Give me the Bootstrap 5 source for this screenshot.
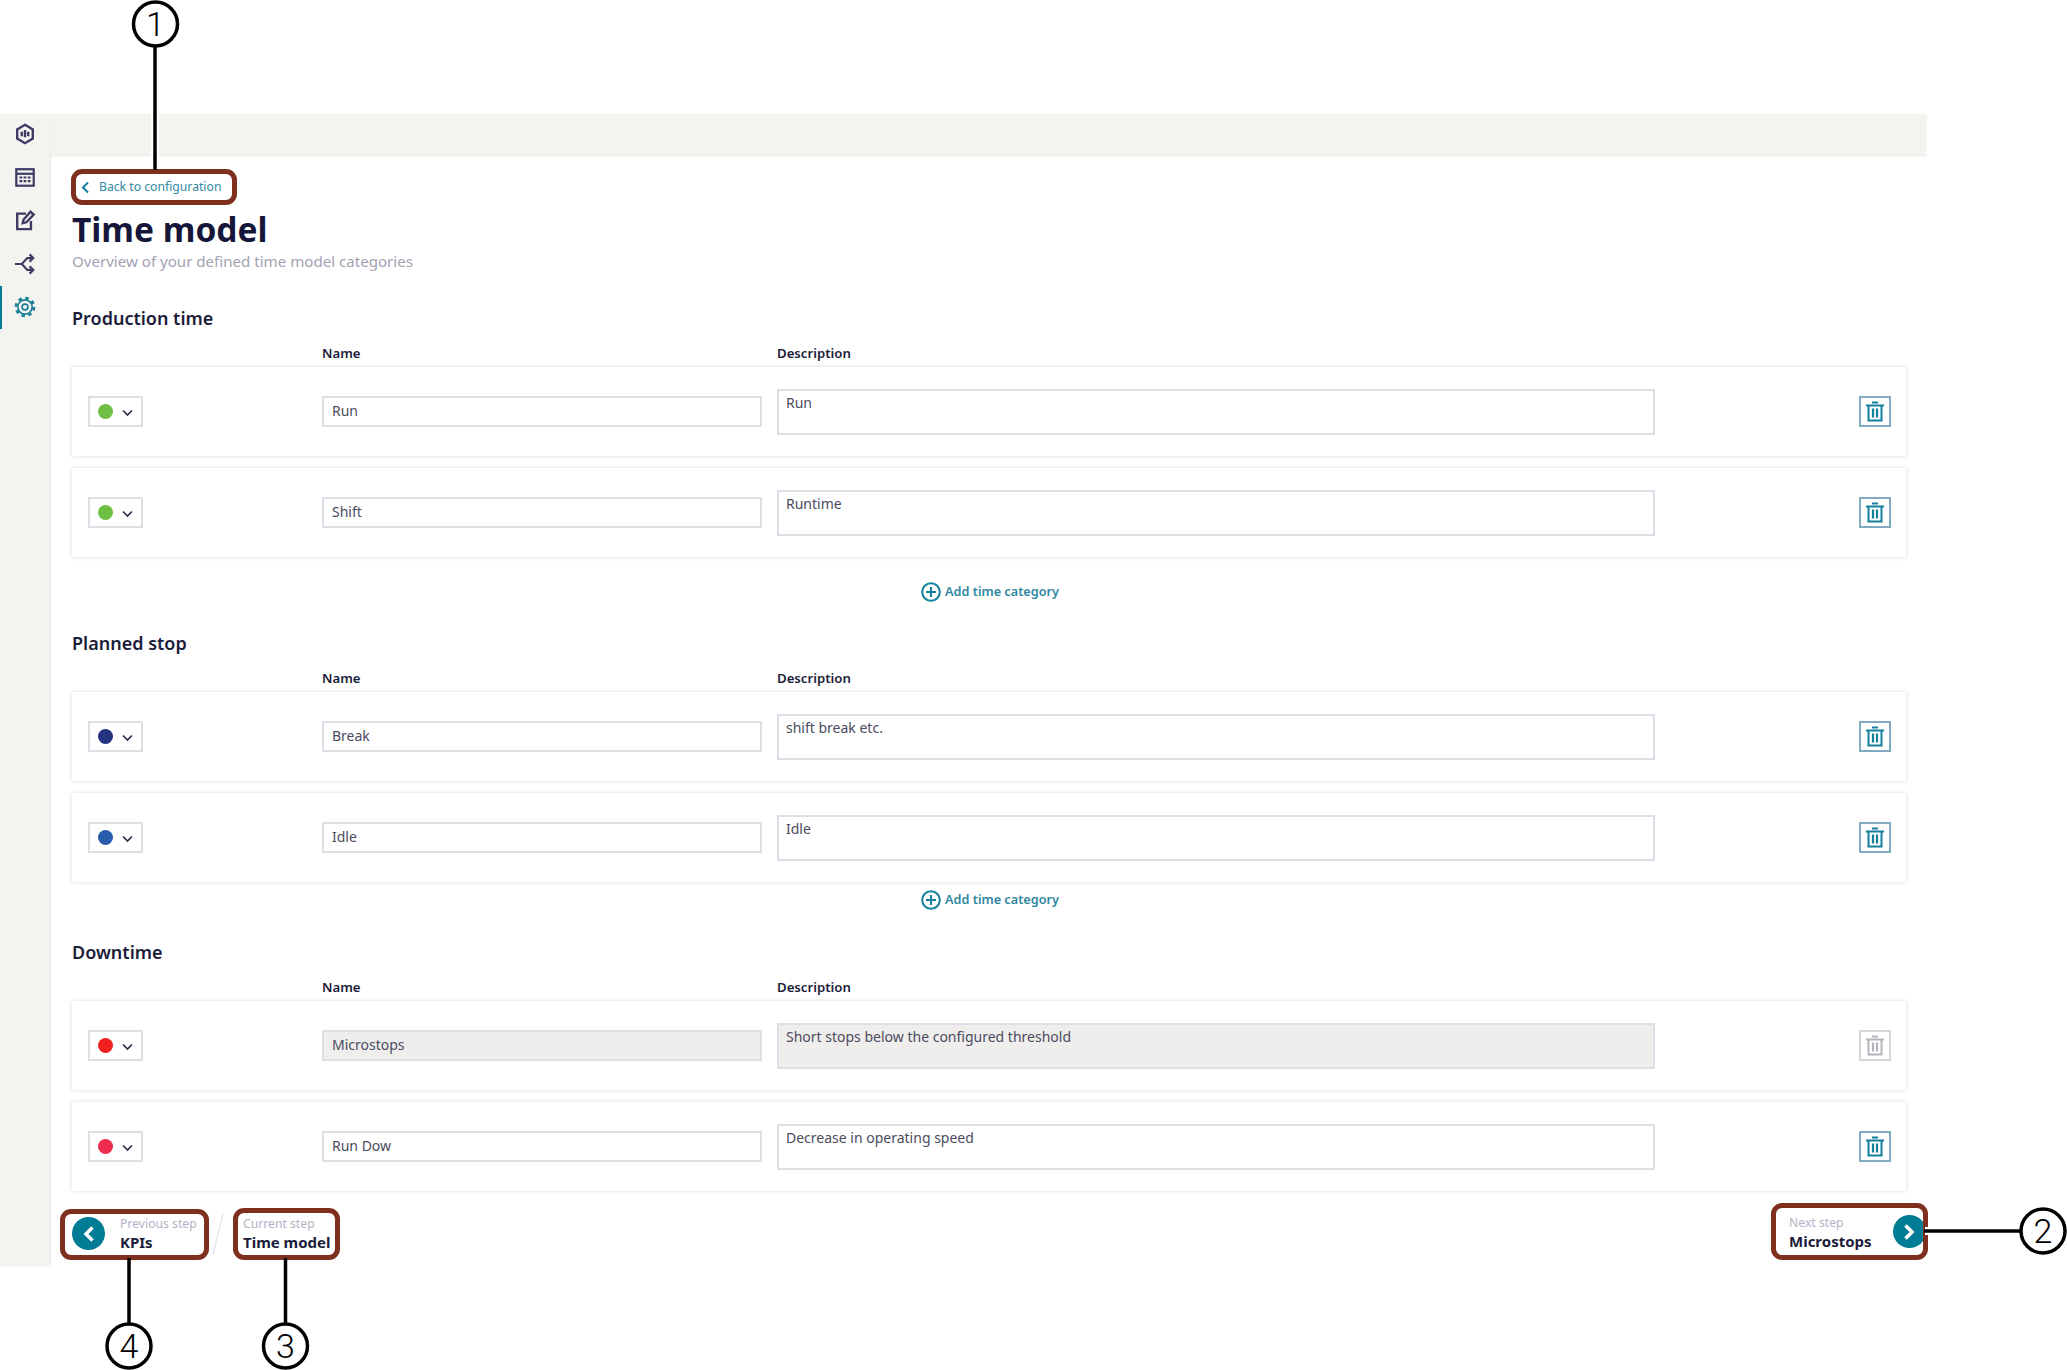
<!DOCTYPE html>
<html lang="en">
<head>
    <meta charset="UTF-8">
    <meta name="viewport" content="width=device-width, initial-scale=1.0">
    <title>Time model</title>
    <link href="https://cdn.jsdelivr.net/npm/bootstrap@5.3.0/dist/css/bootstrap.min.css" rel="stylesheet">
    <style>
        body { font-family: "Noto Sans", "Liberation Sans", sans-serif; color: #1b1b3a; background: #fff; width: 2067px; height: 1370px; overflow: hidden; position: relative; }
        .app-frame { width: 1926px; height: 1153px; margin-top: 114px; }
        .side-rail { width: 50px; background: #f3f3ef; flex: none; box-shadow: 1px 0 1px #ecebe6; }
        .rail-item { height: 43.4px; color: #3d3b63; position: relative; }
        .rail-item:first-child { margin-top: -2px; }
        .rail-item svg { width: 22px; height: 22px; }
        .rail-item.active { color: #1d8098; }
        .rail-item.active::before { content: ""; position: absolute; left: 0; top: 0; bottom: 0; width: 2px; background: #007c95; }
        .main-pane { min-width: 0; }
        .top-strip { height: 41px; background: #f3f3ef; box-shadow: 0 1px 2px #e9e8e4; }
        .page-body { padding: 0 20px 0 22px; }
        .callout-box { border: 5px solid #7f2f1d; border-radius: 11px; background: #fff; }
        .back-link { width: 166px; height: 36px; margin-left: -1px; margin-top: 14px; padding-left: 5px; font-size: 12.2px; color: #2f8aa1; text-decoration: none; gap: 9px; white-space: nowrap; }
        .back-link svg { width: 9px; height: 13px; flex: none; }
        .page-title { font-size: 33.5px; line-height: 40px; font-weight: 700; margin: 4px 0 2px; color: #16163a; }
        .page-sub { font-size: 15.1px; line-height: 20px; color: #a3a2b3; }
        .group-title { font-size: 18px; line-height: 26px; font-weight: 600; margin: 0; color: #1b1b3a; }
        .first-group { margin-top: 34px; }
        .later-group { margin-top: 28px; }
        .last-group { margin-top: 29px; }
        .grid-cols { display: grid; grid-template-columns: 234px 440px 878px 1fr; column-gap: 0; }
        .col-names { padding-left: 16px; font-size: 13.2px; line-height: 18px; font-weight: 600; margin-top: 13px; margin-bottom: 5px; }
        .col-names span:nth-child(3) { margin-left: 15px; }
        .cat-card { border: 0; border-radius: 0; padding: 0 15px 0 16px; height: 89px; margin-bottom: 12px; align-items: center; box-shadow: 0 0 4px rgba(60, 60, 60, .2); }
        .dot-select { width: 55px; height: 31px; border: 2px solid #e0dfe6; padding-left: 8px; gap: 9px; background: #fff; }
        .dot-mark { width: 15px; height: 15px; border-radius: 50%; }
        .dot-select svg { width: 11px; height: 8px; margin-top: 2px; }
        .field-box { border: 2px solid #dfdee6; border-radius: 0; font-size: 14px; color: #4b4b60; padding: 2px 8px 4px; box-shadow: none; resize: none; }
        .name-box { width: 440px; height: 31px; }
        .desc-box { width: 878px; height: 46px; margin-left: 15px; line-height: 20px; padding: 2px 7px; overflow: hidden; }
        .field-box:disabled { background: #efeeec; opacity: 1; }
        .trash-btn { width: 32px; height: 31px; border: 2px solid #80abc0; border-radius: 0; padding: 0; color: #127f9c; background: #fff; }
        .trash-btn svg { width: 20px; height: 21px; }
        .trash-btn:disabled { border-color: #d8d7df; color: #b4b4bc; opacity: 1; }
        .add-link { height: 20px; font-size: 12.7px; font-weight: 600; color: #2f88a0; text-decoration: none; gap: 4px; margin-top: 25px; padding-left: 2px; }
        .add-link.add-tight { margin-top: -4px; }
        .add-link svg { width: 20px; height: 20px; }
        .wizard-foot { margin: 0 -22px 0 -12px; align-items: flex-end; }
        .wizard-step { overflow: hidden; }
        .step-tag { font-size: 12.2px; line-height: 16px; color: #b3b2c3; }
        .step-name { font-size: 15px; line-height: 20px; font-weight: 700; color: #1b1b3a; }
        .step-round { width: 33px; height: 33px; border-radius: 50%; background: #007c95; flex: none; }
        .step-round svg { width: 14px; height: 18px; }
        .prev-step { width: 149px; height: 51px; padding: 0 0 2px 7px; gap: 15px; }
        .cur-step { width: 107px; height: 52px; padding: 3px 0 0 5px; margin-left: 24px; position: relative; }
        .cur-step-wrap { position: relative; }
        .step-slash { width: 12px; height: 40px; position: absolute; left: 152px; bottom: 6px; }
        .next-step { width: 157px; height: 57px; padding: 2px 0 0 13px; gap: 21px; }
        .next-step .step-round { margin-top: -2px; }
        .anno-layer { position: absolute; left: 0; top: 0; width: 2067px; height: 1370px; pointer-events: none; }
        .anno-layer text { font-family: "Roboto", "Liberation Sans", sans-serif; font-weight: 300; font-size: 34px; text-anchor: middle; fill: #000; }
    </style>
</head>
<body>
    <svg width="0" height="0" class="position-absolute">
        <symbol id="ico-down" viewBox="0 0 10 7"><path d="M1 1.200 5 5.400 9 1.200" fill="none" stroke="#2c2c44" stroke-width="1.500"/></symbol>
        <symbol id="ico-trash" viewBox="0 0 20 21"><g fill="none" stroke="currentColor"><path d="M7 1.500h6" stroke-width="2"/><path d="M1 4.500h18" stroke-width="2"/><path d="M3.500 5v14.500h13V5" stroke-width="2"/><path d="M8 7.500v9M12 7.500v9" stroke-width="2.200"/></g></symbol>
        <symbol id="ico-plus" viewBox="0 0 20 20"><g fill="none" stroke="#127f9c" stroke-width="2"><circle cx="10" cy="10" r="8.800"/><path d="M10 5v10M5 10h10"/></g></symbol>
    </svg>

    <div class="app-frame d-flex">
        <!-- Left icon rail -->
        <nav class="side-rail d-flex flex-column">
            <div class="rail-item d-flex align-items-center justify-content-center">
                <svg viewBox="0 0 24 24" fill="none" stroke="currentColor" stroke-width="2.600"><path d="M12 2 20.500 7v10L12 22l-8.500-5V7z"/><path d="M8.500 9.500v5M12 7.500v8M15.500 9.500v5"/></svg>
            </div>
            <div class="rail-item d-flex align-items-center justify-content-center">
                <svg viewBox="0 0 24 24" fill="none" stroke="currentColor" stroke-width="2.400"><rect x="2.500" y="3.500" width="19" height="18"/><path d="M2.500 8.500h19"/><path d="M6 12.500h3M10.500 12.500h3M15 12.500h3M6 16.500h3M10.500 16.500h3M15 16.500h3" stroke-width="2.200"/></svg>
            </div>
            <div class="rail-item d-flex align-items-center justify-content-center">
                <svg viewBox="0 0 24 24" fill="none" stroke="currentColor" stroke-width="2.600"><path d="M13 5H3.500v17h15v-9"/><path d="M9.500 15.500l1-4L18 3l3.500 3-8 8.500z"/></svg>
            </div>
            <div class="rail-item d-flex align-items-center justify-content-center">
                <svg viewBox="0 0 24 24" fill="none" stroke="currentColor" stroke-width="2.400"><path d="M1 12h7.500l6-6.500h6M8.500 12l6 6.500h6"/><path d="M17 1.500l4 4-4 4M17 14.500l4 4-4 4"/></svg>
            </div>
            <div class="rail-item active d-flex align-items-center justify-content-center">
                <svg viewBox="0 0 24 24" fill="none" stroke="currentColor"><circle cx="12" cy="12" r="3.200" stroke-width="1.800"/><circle cx="12" cy="12" r="7.800" stroke-width="1.800"/><circle cx="12" cy="12" r="9.800" stroke-width="3" stroke-dasharray="3.800 3.900"/></svg>
            </div>
        </nav>

        <div class="main-pane flex-grow-1">
            <div class="top-strip"></div>
            <div class="page-body">
                <a href="#" class="back-link callout-box d-flex align-items-center">
                    <svg viewBox="0 0 9 13"><path d="M7 1.500 2 6.500l5 5" fill="none" stroke="#127f9c" stroke-width="2"/></svg>
                    <span>Back to configuration</span>
                </a>
                <h1 class="page-title">Time model</h1>
                <div class="page-sub">Overview of your defined time model categories</div>

                <!-- Production time -->
                <h2 class="group-title first-group">Production time</h2>
                <div class="grid-cols col-names"><span></span><span>Name</span><span>Description</span></div>
                <div class="card cat-card grid-cols">
                    <div class="dot-select d-flex align-items-center"><span class="dot-mark" style="background:#6fbf44"></span><svg><use href="#ico-down"/></svg></div>
                    <input class="form-control field-box name-box" value="Run">
                    <textarea class="form-control field-box desc-box">Run</textarea>
                    <div class="d-flex justify-content-end"><button type="button" class="btn trash-btn d-flex align-items-center justify-content-center"><svg><use href="#ico-trash"/></svg></button></div>
                </div>
                <div class="card cat-card grid-cols">
                    <div class="dot-select d-flex align-items-center"><span class="dot-mark" style="background:#6fbf44"></span><svg><use href="#ico-down"/></svg></div>
                    <input class="form-control field-box name-box" value="Shift">
                    <textarea class="form-control field-box desc-box">Runtime</textarea>
                    <div class="d-flex justify-content-end"><button type="button" class="btn trash-btn d-flex align-items-center justify-content-center"><svg><use href="#ico-trash"/></svg></button></div>
                </div>
                <a href="#" class="add-link d-flex align-items-center justify-content-center"><svg><use href="#ico-plus"/></svg>Add time category</a>

                <!-- Planned stop -->
                <h2 class="group-title later-group">Planned stop</h2>
                <div class="grid-cols col-names"><span></span><span>Name</span><span>Description</span></div>
                <div class="card cat-card grid-cols">
                    <div class="dot-select d-flex align-items-center"><span class="dot-mark" style="background:#24327f"></span><svg><use href="#ico-down"/></svg></div>
                    <input class="form-control field-box name-box" value="Break">
                    <textarea class="form-control field-box desc-box">shift break etc.</textarea>
                    <div class="d-flex justify-content-end"><button type="button" class="btn trash-btn d-flex align-items-center justify-content-center"><svg><use href="#ico-trash"/></svg></button></div>
                </div>
                <div class="card cat-card grid-cols">
                    <div class="dot-select d-flex align-items-center"><span class="dot-mark" style="background:#2a5cad"></span><svg><use href="#ico-down"/></svg></div>
                    <input class="form-control field-box name-box" value="Idle">
                    <textarea class="form-control field-box desc-box">Idle</textarea>
                    <div class="d-flex justify-content-end"><button type="button" class="btn trash-btn d-flex align-items-center justify-content-center"><svg><use href="#ico-trash"/></svg></button></div>
                </div>
                <a href="#" class="add-link add-tight d-flex align-items-center justify-content-center"><svg><use href="#ico-plus"/></svg>Add time category</a>

                <!-- Downtime -->
                <h2 class="group-title last-group">Downtime</h2>
                <div class="grid-cols col-names"><span></span><span>Name</span><span>Description</span></div>
                <div class="card cat-card grid-cols">
                    <div class="dot-select d-flex align-items-center"><span class="dot-mark" style="background:#f0201f"></span><svg><use href="#ico-down"/></svg></div>
                    <input class="form-control field-box name-box" value="Microstops" disabled>
                    <textarea class="form-control field-box desc-box" disabled>Short stops below the configured threshold</textarea>
                    <div class="d-flex justify-content-end"><button type="button" class="btn trash-btn d-flex align-items-center justify-content-center" disabled><svg><use href="#ico-trash"/></svg></button></div>
                </div>
                <div class="card cat-card grid-cols">
                    <div class="dot-select d-flex align-items-center"><span class="dot-mark" style="background:#ef2b4e"></span><svg><use href="#ico-down"/></svg></div>
                    <input class="form-control field-box name-box" value="Run Dow">
                    <textarea class="form-control field-box desc-box">Decrease in operating speed</textarea>
                    <div class="d-flex justify-content-end"><button type="button" class="btn trash-btn d-flex align-items-center justify-content-center"><svg><use href="#ico-trash"/></svg></button></div>
                </div>

                <!-- Wizard steps -->
                <div class="wizard-foot d-flex justify-content-between">
                    <div class="d-flex align-items-end cur-step-wrap">
                        <a href="#" class="wizard-step prev-step callout-box d-flex align-items-center text-decoration-none">
                            <span class="step-round d-flex align-items-center justify-content-center"><svg viewBox="0 0 14 18"><path d="M10.500 2.500 4 9l6.500 6.500" fill="none" stroke="#fff" stroke-width="3.500"/></svg></span>
                            <span class="d-block"><span class="step-tag d-block">Previous step</span><span class="step-name d-block">KPIs</span></span>
                        </a>
                        <svg class="step-slash" viewBox="0 0 12 40"><path d="M11 0 1 40" stroke="#e3e2e8" stroke-width="1.200"/></svg>
                        <div class="wizard-step cur-step callout-box">
                            <div class="step-tag">Current step</div>
                            <div class="step-name">Time model</div>
                        </div>
                    </div>
                    <a href="#" class="wizard-step next-step callout-box d-flex align-items-center text-decoration-none">
                        <span class="d-block"><span class="step-tag d-block">Next step</span><span class="step-name d-block">Microstops</span></span>
                        <span class="step-round d-flex align-items-center justify-content-center"><svg viewBox="0 0 14 18"><path d="M3.500 2.500 10 9l-6.500 6.500" fill="none" stroke="#fff" stroke-width="3.500"/></svg></span>
                    </a>
                </div>
            </div>
        </div>
    </div>

    <!-- Numbered callouts drawn over the screen -->
    <svg class="anno-layer" viewBox="0 0 2067 1370">
        <g fill="none" stroke="#fff" stroke-width="8">
            <path d="M155 46V168"/><path d="M1925 1231H2020"/>
        </g>
        <g fill="none" stroke="#000" stroke-width="3.500">
            <path d="M155 46V170"/><path d="M1924 1231H2021"/><path d="M285.500 1258V1324"/><path d="M129 1258V1324"/>
            <circle cx="155.500" cy="24" r="22" fill="#fff"/><circle cx="2043" cy="1231" r="22" fill="#fff"/><circle cx="285.500" cy="1346" r="22" fill="#fff"/><circle cx="129" cy="1346" r="22" fill="#fff"/>
        </g>
        <text x="155.500" y="36">1</text><text x="2043" y="1243">2</text><text x="285.500" y="1358">3</text><text x="129" y="1358">4</text>
    </svg>

    <script src="https://cdn.jsdelivr.net/npm/bootstrap@5.3.0/dist/js/bootstrap.bundle.min.js"></script>
</body>
</html>
